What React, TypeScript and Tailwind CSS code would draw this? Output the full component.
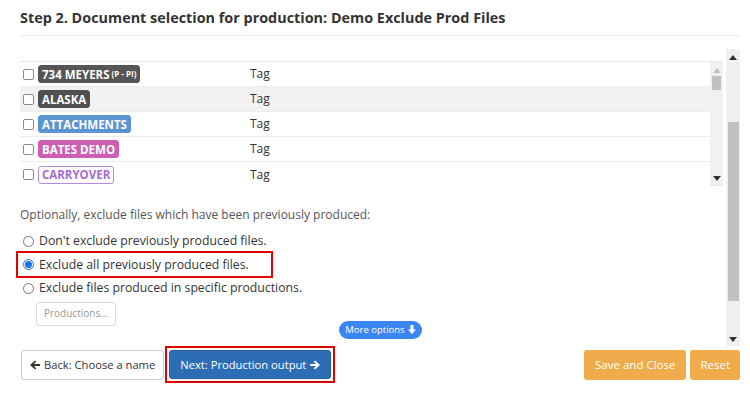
import { ReactNode } from 'react';

type TagRow = {
    label: ReactNode,
    className: string
}

const rows: TagRow[] = [
    { label: <>734 MEYERS<span className="text-[8px] ml-[2px]">(P - PI)</span></>, className: 'bg-[#555555] text-white border-[#555555]' },
    { label: 'ALASKA', className: 'bg-[#505050] text-white border-[#505050]' },
    { label: 'ATTACHMENTS', className: 'bg-[#5b93d3] text-white border-[#5b93d3]' },
    { label: 'BATES DEMO', className: 'bg-[#cc5fb4] text-white border-[#cc5fb4]' },
    { label: 'CARRYOVER', className: 'bg-white text-[#a66bd6] border-[#b889e0]' },
];

function Arrow({ up, className }: { up?: boolean, className?: string }) {
    return (
        <svg width="8" height="5" viewBox="0 0 8 5" className={className}>
            {up
                ? <path d="M0 5 L4 0 L8 5 Z" fill="currentColor" />
                : <path d="M0 0 L8 0 L4 5 Z" fill="currentColor" />}
        </svg>
    );
}

function Checkbox() {
    return <span className="inline-block w-[11px] h-[11px] rounded-[2px] border border-[#8a8a8a] bg-white shrink-0" />;
}

function Radio({ checked }: { checked?: boolean }) {
    return (
        <span className={`inline-flex items-center justify-center w-[11px] h-[11px] rounded-full border shrink-0 ${checked ? 'border-[#1a73e8]' : 'border-[#767676]'} bg-white`}>
            {checked && <span className="w-[7px] h-[7px] rounded-full bg-[#1a73e8]" />}
        </span>
    );
}

export default function App() {
    return (
        <div className="w-[750px] h-[395px] bg-white text-[#333] font-['Open_Sans',sans-serif] pl-5 pr-[10px] overflow-hidden">
            <h2 className="text-[14.4px] font-bold leading-none pt-[11px] pb-[10px] border-b border-[#eeeeee] text-[#333]">
                Step 2. Document selection for production: Demo Exclude Prod Files
            </h2>

            <div className="flex h-[310px]">
                <div className="flex-1 pr-[3px]">
                    <div className="mt-[25px] flex border-t border-b border-[#e6e6e6] h-[125px]">
                        <div className="flex-1">
                            {rows.map((row, i) => (
                                <div key={i} className={`flex items-center h-[25px] border-b border-[#ececec] last:border-b-0 ${i === 1 ? 'bg-[#f2f2f2]' : 'bg-white'}`}>
                                    <div className="w-[230px] flex items-center gap-[4px] pl-[3px]">
                                        <Checkbox />
                                        <span className={`inline-flex items-center h-[18px] px-[3px] rounded-[3px] border text-[11.5px] font-bold leading-none ${row.className}`}>
                                            {row.label}
                                        </span>
                                    </div>
                                    <span className="text-[12px] text-[#333]">Tag</span>
                                </div>
                            ))}
                        </div>
                        <div className="w-[13px] bg-[#f1f1f1] flex flex-col items-center pt-[6px] pb-[4px]">
                            <Arrow up className="text-[#c0c0c0]" />
                            <div className="w-[9px] h-[14px] bg-[#c1c1c1] mt-[3px]" />
                            <div className="flex-1" />
                            <Arrow className="text-[#333]" />
                        </div>
                    </div>

                    <p className="text-[12px] text-[#555] mt-[20px]">Optionally, exclude files which have been previously produced:</p>

                    <div className="mt-[7px] text-[12.25px] text-[#333] flex flex-col">
                        <label className="flex items-center gap-[5px] h-[20px] pl-[3px]">
                            <Radio />
                            Don't exclude previously produced files.
                        </label>
                        <label className="flex items-center gap-[5px] h-[27px] pl-[5px] ml-[-4px] w-[257px] border-2 border-[#e00000]">
                            <Radio checked />
                            Exclude all previously produced files.
                        </label>
                        <label className="flex items-center gap-[5px] h-[20px] pl-[3px]">
                            <Radio />
                            Exclude files produced in specific productions.
                        </label>
                    </div>

                    <div className="mt-[1px] pl-[16px]">
                        <button className="h-[24px] px-[7px] rounded-[3px] border border-[#d9d9d9] bg-white text-[10px] text-[#999]">
                            Productions...
                        </button>
                    </div>

                    <div className="flex justify-center mt-[-5px] pl-[18px]">
                        <button className="h-[18px] px-[6px] rounded-full bg-[#3b86f5] text-white text-[9.5px] flex items-center gap-[3px]">
                            More options
                            <svg width="8" height="9" viewBox="0 0 8 9"><path d="M2.5 0 H5.5 V4.5 H8 L4 9 L0 4.5 H2.5 Z" fill="currentColor" /></svg>
                        </button>
                    </div>
                </div>

                <div className="w-[14px] mt-[13px] bg-[#f0f0f0] flex flex-col items-center pt-[6px] pb-[4px]">
                    <Arrow up className="text-[#333]" />
                    <div className="w-[11px] flex-1 flex flex-col pt-[62px] pb-[36px]">
                        <div className="flex-1 bg-[#c1c1c1]" />
                    </div>
                    <Arrow className="text-[#333]" />
                </div>
            </div>

            <div className="flex items-center">
                <button className="h-[30px] px-[8px] rounded-[3px] border border-[#cccccc] bg-white text-[11.2px] text-[#333] flex items-center gap-[4px] ml-[1px]">
                    <svg width="10" height="10" viewBox="0 0 10 10"><path d="M0 5 L5 0.5 L6.3 1.8 L3.8 4 H10 V6 H3.8 L6.3 8.2 L5 9.5 Z" fill="currentColor" /></svg>
                    Back: Choose a name
                </button>
                <div className="ml-[1px] border-2 border-[#e00000] p-[2px]">
                    <button className="h-[29px] px-[10px] rounded-[3px] bg-[#2d6db5] border border-[#285f9e] text-white text-[11.2px] font-medium flex items-center gap-[4px]">
                        Next: Production output
                        <svg width="10" height="10" viewBox="0 0 10 10"><path d="M10 5 L5 0.5 L3.7 1.8 L6.2 4 H0 V6 H6.2 L3.7 8.2 L5 9.5 Z" fill="currentColor" /></svg>
                    </button>
                </div>
                <div className="flex-1" />
                <button className="h-[30px] px-[11px] rounded-[3px] bg-[#efab4c] text-white text-[11.5px]">
                    Save and Close
                </button>
                <button className="h-[30px] px-[10px] rounded-[3px] bg-[#efab4c] text-white text-[11.5px] ml-[4px]">
                    Reset
                </button>
            </div>
        </div>
    );
}
